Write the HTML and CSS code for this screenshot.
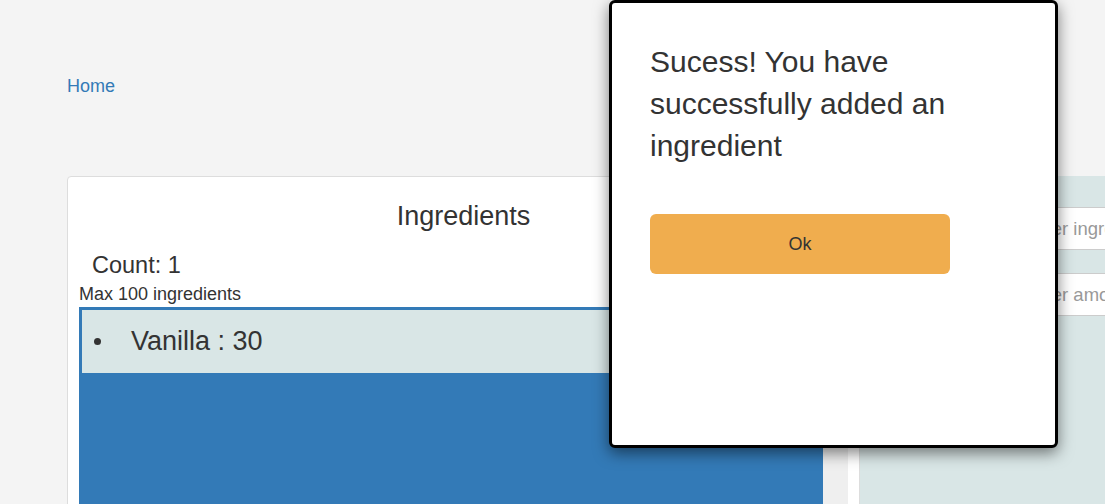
FILE: index.html
```html
<!DOCTYPE html>
<html lang="en">
<head>
<meta charset="utf-8">
<title>Ingredients</title>
<link rel="stylesheet" href="styles.css">
</head>
<body>
<div class="page">
  <nav class="nav"><a href="#" class="nav-link">Home</a></nav>
  <div class="row">
    <section class="card">
      <h2 class="card-title">Ingredients</h2>
      <div class="count">Count: 1</div>
      <div class="max">Max 100 ingredients</div>
      <div class="list-wrap">
        <ul class="list">
          <li class="list-item">Vanilla : 30</li>
        </ul>
        <div class="gutter"></div>
      </div>
    </section>
    <aside class="panel">
      <form class="form">
        <label class="form-label">Ingredient</label>
        <input class="form-input" type="text" placeholder="Enter ingredient">
        <label class="form-label">Amount</label>
        <input class="form-input" type="text" placeholder="Enter amount">
      </form>
    </aside>
  </div>
</div>
<div class="modal">
  <p class="modal-text">Sucess! You have successfully added an ingredient</p>
  <button class="modal-btn" type="button">Ok</button>
</div>
</body>
</html>
```
FILE: styles.css
```css
html, body {
  margin: 0;
  padding: 0;
  overflow: hidden;
}
body {
  background: #f4f4f4;
  font-family: "Liberation Sans", Arial, sans-serif;
  color: #333;
  height: 504px;
  position: relative;
}
.page {
  padding-left: 67px;
}
.nav {
  padding-top: 76px;
  line-height: 20px;
  height: 20px;
}
.nav-link {
  color: #337ab7;
  font-size: 18px;
  text-decoration: none;
}
.row {
  display: flex;
  margin-top: 80px;
  width: 1300px;
}
.card {
  width: 793px;
  box-sizing: border-box;
  background: #fff;
  border: 1px solid #dddddd;
  border-radius: 4px;
  padding: 0 11px;
  min-height: 420px;
}
.card-title {
  margin: 24px 0 0;
  text-align: center;
  font-size: 27px;
  line-height: 30px;
  font-weight: normal;
}
.count {
  margin-top: 21px;
  padding-left: 13px;
  font-size: 23.5px;
  line-height: 26px;
}
.max {
  margin-top: 6px;
  font-size: 18px;
  line-height: 20px;
}
.list-wrap {
  display: flex;
  margin-top: 3px;
}
.list {
  width: 744px;
  box-sizing: border-box;
  margin: 0;
  padding: 3px;
  list-style: none;
  background: #337ab7;
  min-height: 300px;
}
.gutter {
  flex: 1;
  background: #efefef;
}
.list-item {
  position: relative;
  height: 63px;
  display: flex;
  align-items: center;
  padding-left: 49px;
  background: #d9e6e6;
  font-size: 27px;
}
.list-item::before {
  content: "";
  position: absolute;
  left: 12px;
  top: 28px;
  width: 7px;
  height: 7px;
  border-radius: 50%;
  background: #333;
}
.panel {
  width: 440px;
  background: #d9e6e6;
  padding: 31px 0 0 12px;
  min-height: 420px;
}
.form {
  display: grid;
  grid-template-columns: 127px 1fr;
  column-gap: 12px;
  row-gap: 23px;
}
.form-label {
  font-size: 16px;
  line-height: 43px;
}
.form-input {
  height: 43px;
  box-sizing: border-box;
  border: 1px solid #ccc;
  border-right: none;
  background: #fff;
  padding: 0 12px;
  font-family: "Liberation Sans", Arial, sans-serif;
  font-size: 18.5px;
  color: #333;
  outline: none;
}
.form-input::placeholder {
  color: #999;
}
.modal {
  position: absolute;
  left: 609px;
  top: 0;
  width: 449px;
  height: 448px;
  box-sizing: border-box;
  border: 3px solid #000;
  border-radius: 6px;
  background: #fff;
  box-shadow: 0 5px 15px rgba(0, 0, 0, 0.5);
  padding: 38px 38px 0;
}
.modal-text {
  margin: 0;
  width: 310px;
  font-size: 30px;
  line-height: 42px;
}
.modal-btn {
  display: block;
  margin-top: 47px;
  width: 300px;
  height: 60px;
  border: none;
  border-radius: 6px;
  background: #f0ad4e;
  color: #333;
  font-family: "Liberation Sans", Arial, sans-serif;
  font-size: 18px;
}
```
